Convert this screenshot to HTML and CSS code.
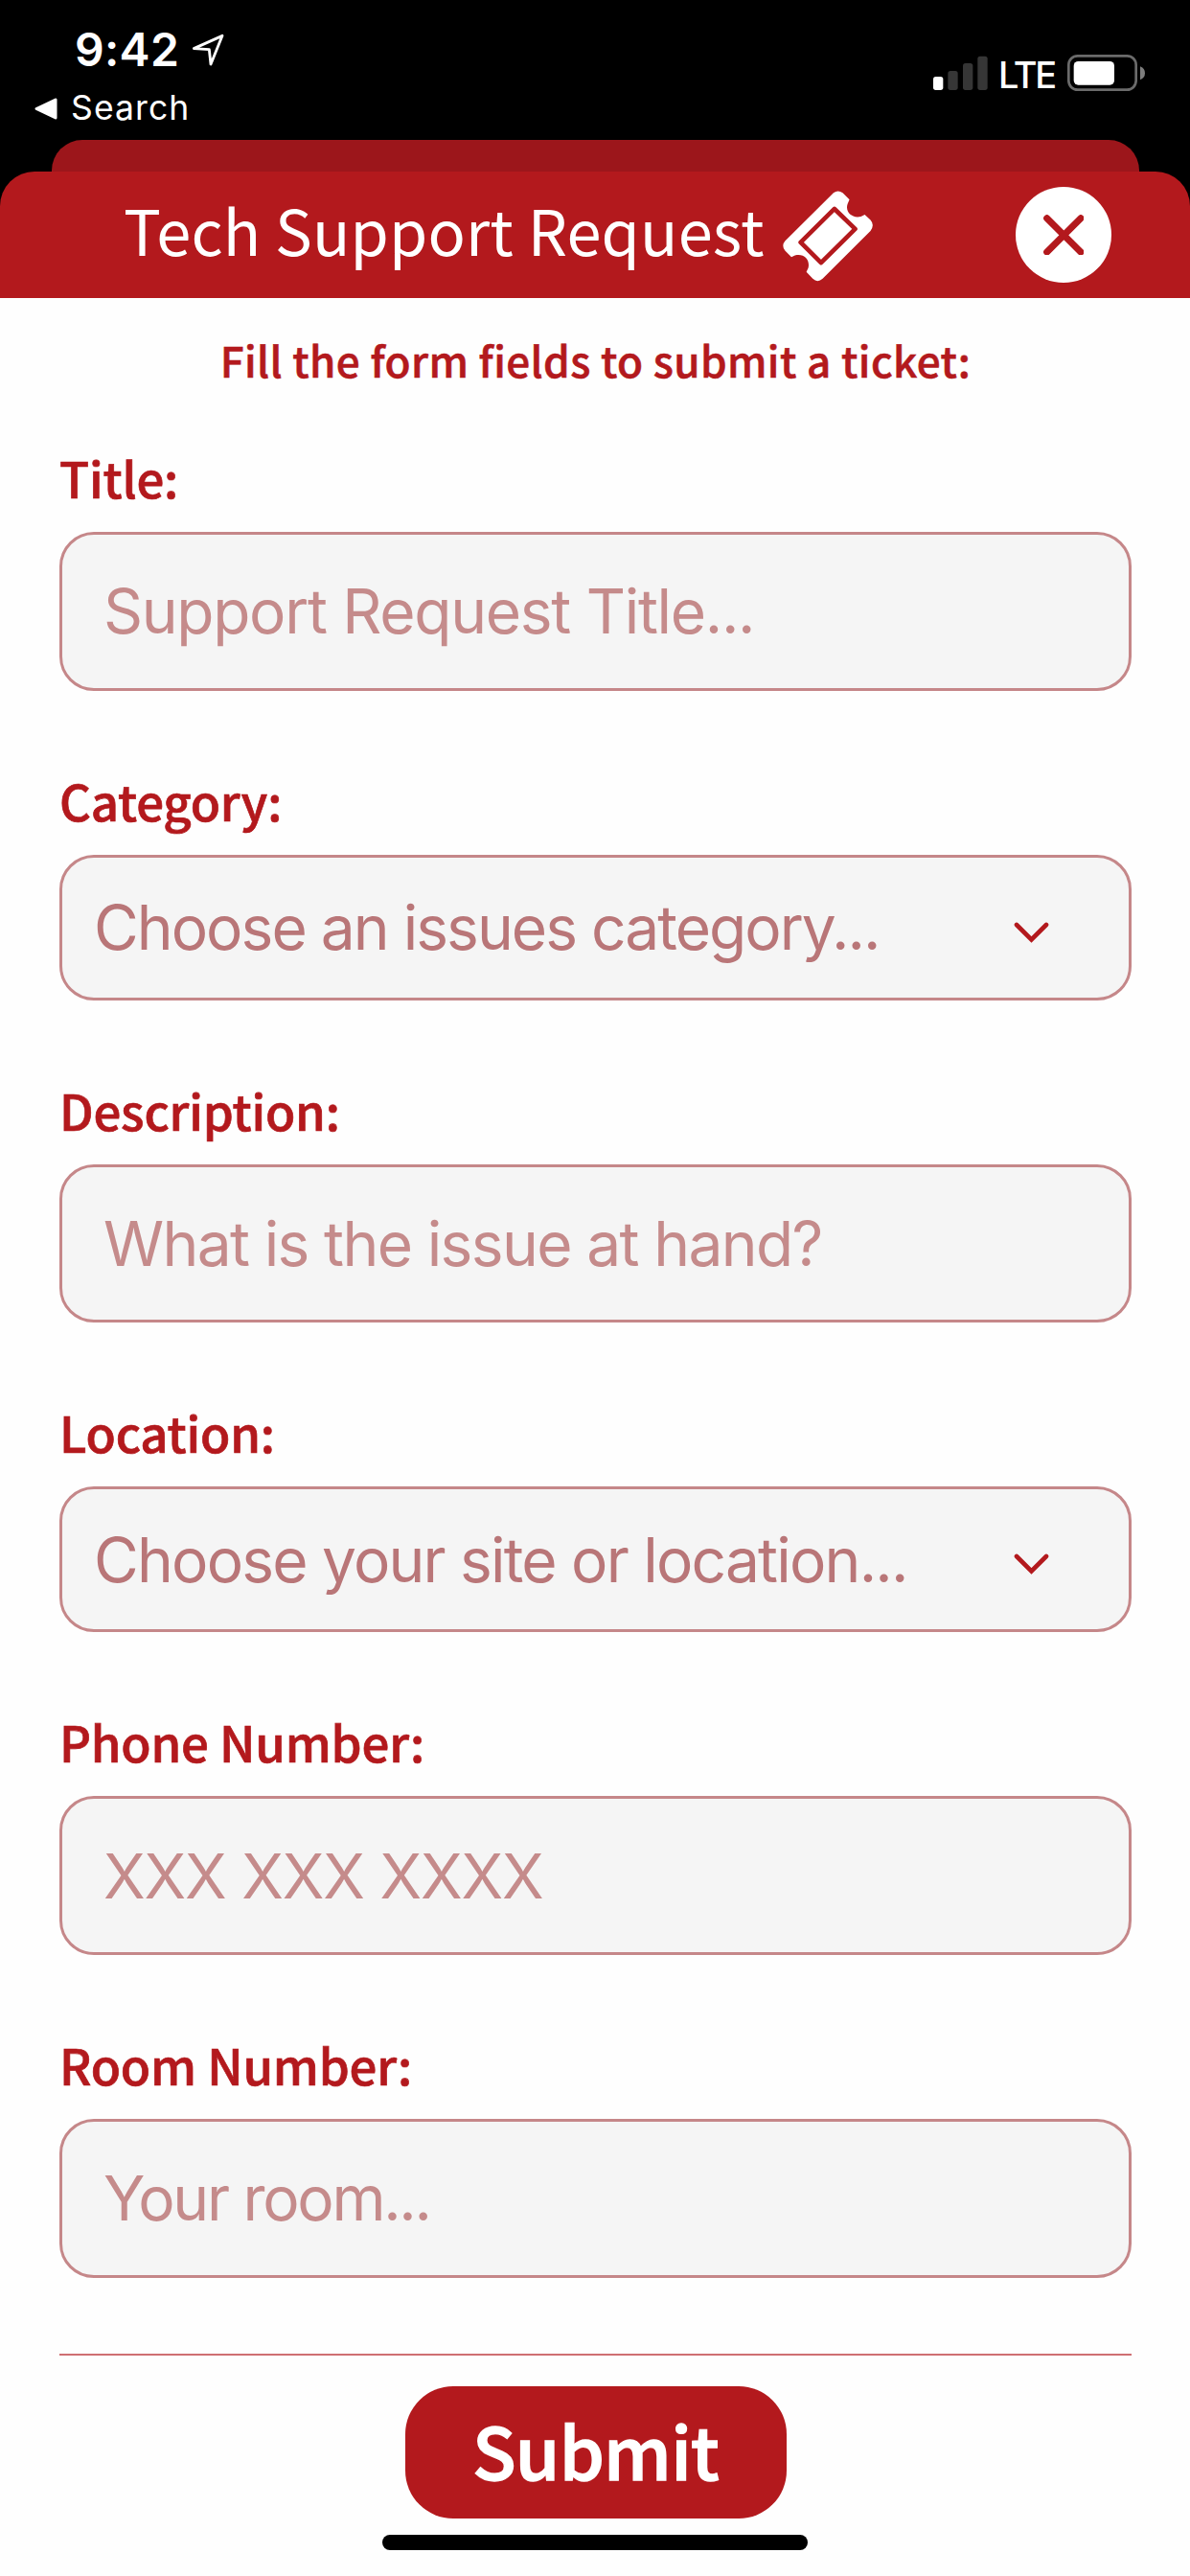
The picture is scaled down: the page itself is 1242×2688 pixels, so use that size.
FILE: index.html
```html
<!DOCTYPE html>
<html lang="en">
<head>
<meta charset="utf-8">
<title>Tech Support Request</title>
<link rel="stylesheet" href="styles.css">
</head>
<body>
<div class="screen">
  <div class="status">
    <div class="status-left">
      <div class="time-row">
        <span class="time">9:42</span>
        <svg class="locate" viewBox="596 100 104 108"><path d="M603 150 L692 110 L656 199 L651 153 Z" fill="none" stroke="#fff" stroke-width="8.5" stroke-linejoin="round"/></svg>
      </div>
      <div class="back-row">
        <svg class="back-arrow" viewBox="0 0 24 23"><path d="M2 11.500 L22 2 V21 Z" fill="#fff" stroke="#fff" stroke-width="3" stroke-linejoin="round"/></svg>
        <span class="back">Search</span>
      </div>
    </div>
    <div class="status-right">
      <svg class="signal" viewBox="581 171 171 114">
        <rect x="581" y="240" width="31" height="42" rx="8" fill="#fff"/>
        <rect x="627" y="222" width="31" height="60" rx="8" fill="#363636"/>
        <rect x="674" y="198" width="31" height="84" rx="8" fill="#363636"/>
        <rect x="720" y="176" width="31" height="106" rx="8" fill="#363636"/>
      </svg>
      <span class="network">LTE</span>
      <svg class="battery" viewBox="1002 171 246 114">
        <rect x="1006" y="175" width="211" height="106" rx="28" fill="none" stroke="#6b6b6b" stroke-width="8"/>
        <rect x="1022" y="192" width="127" height="74" rx="14" fill="#fff"/>
        <path d="M1230 208 Q1245 214 1245 229 Q1245 244 1230 250 Z" fill="#7d7d7d"/>
      </svg>
    </div>
  </div>
  <div class="sheet-behind"></div>
  <main class="sheet">
    <header class="header">
      <h1 class="heading">Tech Support Request</h1>
      <svg class="ticket" viewBox="113 596 284 284">
        <path d="M272 603 Q286 592 301 603 L322 624 L316 638 C308 662 330 684 358 677 L370 671 L388 688 Q402 704 388 722 L238 872 Q222 886 207 872 L187 851 L193 838 C199 812 180 792 151 799 L140 804 L120 784 Q108 768 120 754 Z" fill="#fff"/>
        <path d="M275 653 L340 716 L233 822 L169 758 Z" fill="none" stroke="#b3191d" stroke-width="14" stroke-linejoin="round"/>
      </svg>
      <button class="close" type="button" aria-label="Close">
        <svg class="close-icon" viewBox="0 0 128 128"><path d="M11 11 L117 117 M117 11 L11 117" stroke="#b3191d" stroke-width="21" stroke-linecap="round"/></svg>
      </button>
    </header>
    <form class="form">
      <p class="hint">Fill the form fields to submit a ticket:</p>
      <div class="fields">
        <div class="field">
          <label class="label" for="title">Title:</label>
          <input class="input input-title" id="title" placeholder="Support Request Title...">
        </div>
        <div class="field">
          <span class="label">Category:</span>
          <div class="select select-category"><span>Choose an issues category...</span>
            <svg class="chevron" viewBox="0 0 37 22"><path d="M3 3 L18.500 18.500 L34 3" fill="none" stroke="#b3191d" stroke-width="4.600" stroke-linecap="round"/></svg>
          </div>
        </div>
        <div class="field">
          <label class="label" for="description">Description:</label>
          <input class="input input-description" id="description" placeholder="What is the issue at hand?">
        </div>
        <div class="field">
          <span class="label">Location:</span>
          <div class="select select-location"><span>Choose your site or location...</span>
            <svg class="chevron" viewBox="0 0 37 22"><path d="M3 3 L18.500 18.500 L34 3" fill="none" stroke="#b3191d" stroke-width="4.600" stroke-linecap="round"/></svg>
          </div>
        </div>
        <div class="field">
          <label class="label" for="phone">Phone Number:</label>
          <input class="input input-phone" id="phone" placeholder="XXX XXX XXXX">
        </div>
        <div class="field">
          <label class="label" for="room">Room Number:</label>
          <input class="input input-room" id="room" placeholder="Your room...">
        </div>
      </div>
      <div class="footer">
        <button class="submit" type="button">Submit</button>
      </div>
    </form>
    <div class="home-bar"></div>
  </main>
</div>
</body>
</html>
```
FILE: styles.css
```css
* { box-sizing: border-box; }
body { margin: 0; background: #000; }
svg { display: block; flex: none; }

.screen {
  width: 1242px;
  height: 2688px;
  display: flex;
  flex-direction: column;
  overflow: hidden;
  background: #000;
  font-family: "Noto Sans CJK SC", "Noto Sans", sans-serif;
}

.status {
  height: 145.500px;
  flex: none;
  display: flex;
  justify-content: space-between;
  color: #fff;
  font-family: Inter, sans-serif;
}
.status-left { padding: 22px 0 0 36px; }
.time-row { display: flex; align-items: center; padding-left: 42px; height: 60px; }
.time { font-size: 48px; font-weight: 600; line-height: 60px; letter-spacing: 0.300px; }
.locate { width: 34.700px; height: 36px; margin: -1px 0 0 13px; }
.back-row { display: flex; align-items: center; height: 62px; }
.back-arrow { width: 24px; height: 23px; }
.back { font-size: 35.500px; line-height: 62px; letter-spacing: 1.100px; margin-left: 14px; }
.status-right { display: flex; padding: 57px 46px 0 0; height: 95px; }
.signal { width: 57px; height: 38px; }
.network { font-size: 38px; font-weight: 500; line-height: 42px; letter-spacing: -2.200px; width: 75px; padding-left: 11px; margin-right: 8px; white-space: nowrap; }
.battery { width: 82px; height: 38px; }

.sheet-behind {
  height: 33.500px;
  flex: none;
  margin: 0 53px 0 54px;
  background: #9c161b;
  border-radius: 32px 32px 0 0;
}

.sheet { flex: 1; display: flex; flex-direction: column; background: linear-gradient(#000 60px, #fefefe 60px); }
.header {
  height: 132px;
  flex: none;
  display: flex;
  padding: 0 82px 0 129px;
  background: #b3191d;
  border-radius: 36px 36px 0 0;
}
.heading { margin: 0; font-size: 65px; font-weight: 400; line-height: 120px; letter-spacing: 0.150px; color: #fff; white-space: nowrap; }
.ticket { width: 94.500px; height: 94.500px; margin: 20px 0 0 19px; }
.close {
  width: 100px;
  height: 100px;
  flex: none;
  margin: 16px 0 0 auto;
  padding: 0;
  display: grid;
  place-items: center;
  border: 0;
  border-radius: 50%;
  background: #fff;
}
.close-icon { width: 42.700px; height: 42.700px; }

.form { padding: 34px 61px 0 62px; display: flex; flex-direction: column; }
.hint {
  margin: 0 0 63px;
  text-align: center;
  font-size: 44px;
  font-weight: 500;
  line-height: 60px;
  letter-spacing: 0.390px;
  color: #b3191d;
  -webkit-text-stroke: 0.600px #b3191d;
}
.fields { display: flex; flex-direction: column; gap: 84px; }
.field { display: flex; flex-direction: column; gap: 27px; }
.label {
  font-size: 51px;
  font-weight: 500;
  line-height: 60px;
  letter-spacing: -0.200px;
  color: #b3191d;
  -webkit-text-stroke: 0.700px #b3191d;
}
.input, .select {
  width: 100%;
  border: 3px solid #c58789;
  border-radius: 36px;
  background: #f5f5f5;
  font-family: Inter, sans-serif;
  font-size: 64px;
}
.input { height: 165.700px; padding: 0 43px; outline: 0; }
.input::placeholder { color: #c58b8b; opacity: 1; }
.select {
  height: 152px;
  display: flex;
  align-items: center;
  justify-content: space-between;
  padding: 0 83px 0 33px;
  color: #b97678;
  white-space: nowrap;
}
.chevron { width: 37px; height: 22px; margin-top: 10px; }
.input-title { letter-spacing: -1.290px; }
.select-category { letter-spacing: -1.950px; }
.input-description { letter-spacing: -1.620px; }
.select-location { letter-spacing: -1.780px; }
.input-phone { letter-spacing: -1.170px; }
.input-room { letter-spacing: -2.280px; }

.footer {
  margin-top: 79px;
  border-top: 2px solid #cf6f73;
  padding-top: 32px;
  display: flex;
  justify-content: center;
}
.submit {
  width: 398px;
  height: 138.500px;
  padding: 0 0 6px;
  border: 0;
  border-radius: 50px;
  background: #b3191d;
  color: #fff;
  font-family: inherit;
  font-size: 75px;
  font-weight: 500;
  line-height: 132px;
  letter-spacing: -0.700px;
  -webkit-text-stroke: 1.500px #fff;
}
.home-bar { width: 444px; height: 16px; margin: 16.500px auto 0; border-radius: 8px; background: #000; }
```
